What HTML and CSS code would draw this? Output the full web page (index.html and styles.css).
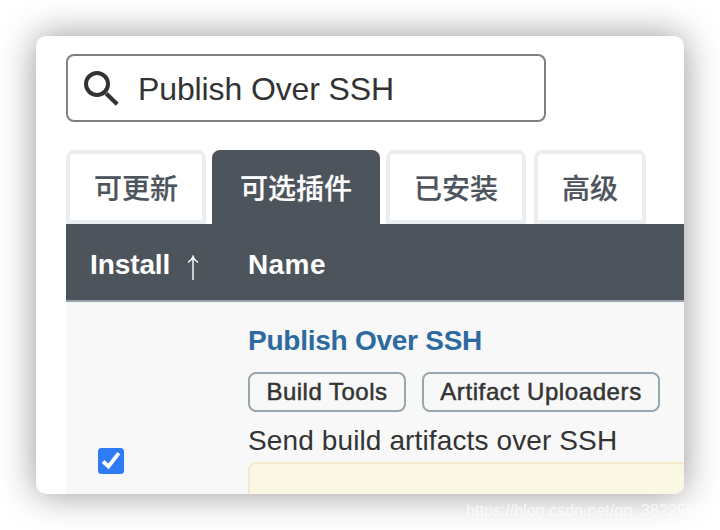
FILE: index.html
```html
<!DOCTYPE html>
<html lang="zh-CN">
<head>
<meta charset="utf-8">
<title>Plugin Manager</title>
<link rel="stylesheet" href="styles.css">
</head>
<body>
<main class="window">
  <label class="search">
    <svg class="search-icon" viewBox="0 0 36 36" width="36" height="36"><circle cx="14" cy="14" r="11" fill="none" stroke="#333" stroke-width="4"/><path d="M23.200 23.400L34.200 34.200" fill="none" stroke="#333" stroke-width="4.200"/></svg>
    <span class="search-text">Publish Over SSH</span>
  </label>
  <nav class="tabs">
    <a class="tab">可更新</a>
    <a class="tab active">可选插件</a>
    <a class="tab">已安装</a>
    <a class="tab last">高级</a>
  </nav>
  <section class="table">
    <header class="head">
      <span class="install">Install</span>
      <svg class="arrow" viewBox="0 0 12 26" width="12" height="26"><path d="M6 25V2M1 7.500Q5 5 6 1.500Q7 5 11 7.500" fill="none" stroke="#fff" stroke-width="1.400"/></svg>
      <span class="name">Name</span>
    </header>
    <div class="row">
      <div class="check-cell">
        <svg class="check" viewBox="0 0 26 26" width="26" height="26"><rect width="26" height="26" rx="3.500" fill="#2f7bf6"/><path d="M5 13.500L10.500 18.500L20.800 5.200" fill="none" stroke="#fff" stroke-width="3.800"/></svg>
      </div>
      <div class="info">
        <a class="title">Publish Over SSH</a>
        <div class="tags"><span class="tag build">Build Tools</span><span class="tag artifact">Artifact Uploaders</span></div>
        <p class="desc">Send build artifacts over SSH</p>
        <div class="notice"></div>
      </div>
    </div>
  </section>
</main>
<div class="watermark">https://blog.csdn.net/qq_38225559</div>
</body>
</html>
```

FILE: styles.css
```css
* { box-sizing: border-box; }
body {
  margin: 0;
  width: 720px;
  height: 530px;
  padding: 36px;
  position: relative;
  overflow: hidden;
  background: #fff;
  color: #333;
  font-family: "Liberation Sans", "Noto Sans CJK SC", sans-serif;
}
.window {
  width: 648px;
  height: 458px;
  padding: 18px 0 0 30px;
  border-radius: 10px;
  background: #fff;
  overflow: hidden;
  box-shadow: 0 0 36px rgba(0, 0, 0, .42);
}
.search {
  display: flex;
  align-items: center;
  width: 480px;
  height: 68px;
  padding-left: 15px;
  border: 2px solid #808080;
  border-radius: 8px;
}
.search-icon { margin-top: -1px; }
.search-text { margin: 2px 0 0 19px; font-size: 32px; letter-spacing: -.12px; white-space: nowrap; }
.tabs { display: flex; gap: 6px; margin-top: 28px; }
.tab {
  height: 74px;
  padding: 0 24px;
  border: 4px solid #ebeef1;
  border-radius: 8px 8px 0 0;
  color: #4d545d;
  font: 500 28px/66px "Noto Sans CJK SC", sans-serif;
  white-space: nowrap;
  -webkit-text-stroke: .2px currentColor;
}
.tab.active { background: #4d545c; border-color: #4d545c; color: #fff; }
.tab.last { margin-left: 2px; }
.head {
  display: flex;
  align-items: center;
  height: 78px;
  padding: 0 0 0 24px;
  border-bottom: 2px solid #98a3ad;
  background: #4d545c;
  color: #fff;
  font-size: 28px;
  font-weight: bold;
}
.install { width: 97px; letter-spacing: -.1px; }
.arrow { margin-top: 12px; }
.name { margin-left: 49px; letter-spacing: .4px; }
.install, .name { line-height: 32px; margin-top: 6px; }
.row { display: flex; height: 192px; background: #f8f8f8; }
.check-cell { width: 182px; flex: none; padding: 146px 0 0 32px; }
.check { display: block; }
.info { flex: 1; min-width: 0; padding-top: 22px; }
.title { display: block; height: 48px; color: #2c6aa0; font-size: 28px; font-weight: bold; line-height: 34px; letter-spacing: -.25px; white-space: nowrap; }
.tags { display: flex; gap: 16px; }
.tag {
  height: 40px;
  border: 2px solid #98a6af;
  border-radius: 8px;
  font-size: 24px;
  line-height: 36px;
  text-align: center;
  white-space: nowrap;
  -webkit-text-stroke: .5px #333;
}
.build { width: 158px; letter-spacing: .5px; }
.artifact { width: 238px; letter-spacing: .6px; }
.desc { height: 50px; margin: 0; font-size: 28px; line-height: 58px; letter-spacing: .12px; white-space: nowrap; }
.notice { height: 60px; margin-right: -20px; border: 2px solid #f5e8cb; border-radius: 8px; background: #faf7e4; }
.watermark {
  position: absolute;
  left: 466px;
  top: 501px;
  font-size: 16px;
  line-height: 20px;
  letter-spacing: .03px;
  color: rgba(255, 255, 255, .7);
  white-space: nowrap;
}
```
